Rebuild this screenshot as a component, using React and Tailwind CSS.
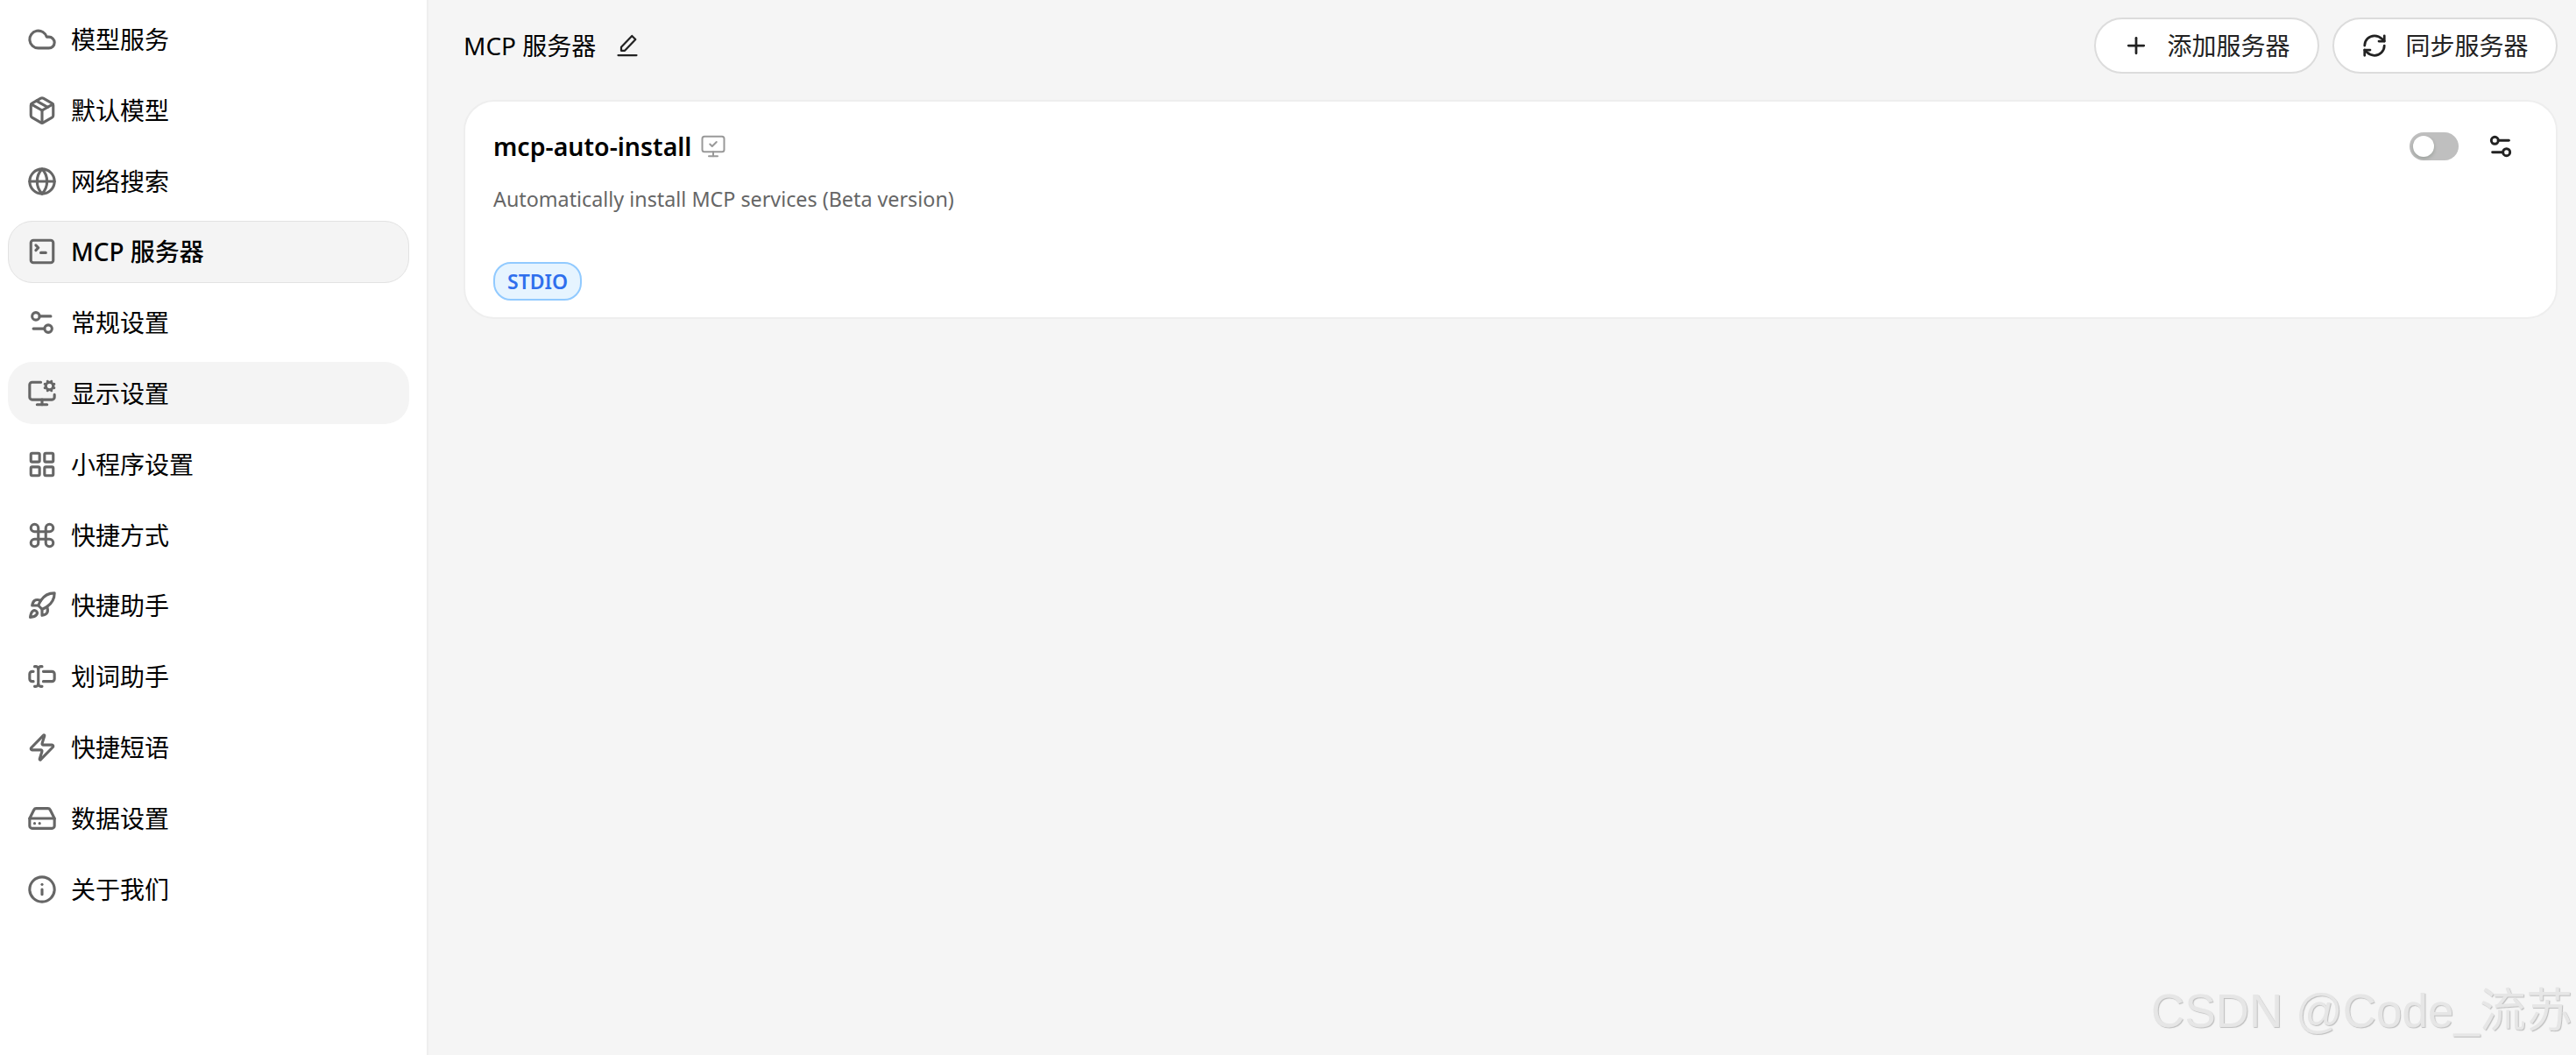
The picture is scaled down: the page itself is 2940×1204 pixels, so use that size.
import React from "react";
import {
  Cloud,
  Package,
  Globe,
  SquareTerminal,
  Settings2,
  MonitorCog,
  LayoutGrid,
  Command,
  Rocket,
  TextCursorInput,
  Zap,
  HardDrive,
  Info,
  MonitorCheck,
  Plus,
  RefreshCw,
} from "lucide-react";

const font = "font-['Noto_Sans','Noto_Sans_CJK_SC',sans-serif]";

const menu = [
  { label: "模型服务", icon: Cloud },
  { label: "默认模型", icon: Package },
  { label: "网络搜索", icon: Globe },
  { label: "MCP 服务器", icon: SquareTerminal, active: true },
  { label: "常规设置", icon: Settings2 },
  { label: "显示设置", icon: MonitorCog, hover: true },
  { label: "小程序设置", icon: LayoutGrid },
  { label: "快捷方式", icon: Command },
  { label: "快捷助手", icon: Rocket },
  { label: "划词助手", icon: TextCursorInput },
  { label: "快捷短语", icon: Zap },
  { label: "数据设置", icon: HardDrive },
  { label: "关于我们", icon: Info },
];

function PenIcon() {
  return (
    <svg width="28" height="28" viewBox="0 0 24 24" fill="none" stroke="#222" strokeWidth="1.9" strokeLinecap="round" strokeLinejoin="round">
      <path d="M3 21.5h18" />
      <path d="M16.5 2.5l3.5 3.5L9.5 17H6v-3.5z" />
    </svg>
  );
}

function MenuItem({ item }) {
  const Icon = item.icon;
  let tone = "border-transparent";
  if (item.active) tone = "border-[#e2e2e2] bg-[#f4f4f4] font-medium";
  if (item.hover) tone = "border-transparent bg-[#f4f4f4]";
  return (
    <div className={`flex h-[71px] items-center gap-[16px] rounded-[28px] border px-[21px] text-[28px] text-black ${tone}`}>
      <Icon size={34} strokeWidth={2.2} className="shrink-0 text-[#666]" />
      <span>{item.label}</span>
    </div>
  );
}

function HeaderButton({ icon: Icon, label }) {
  return (
    <button className="flex h-[64px] w-[257px] items-center justify-center gap-[20px] rounded-full border-2 border-[#dcdcdc] bg-white text-[28px] text-[#222]">
      <Icon size={30} strokeWidth={2.2} />
      <span>{label}</span>
    </button>
  );
}

export default function App() {
  return (
    <div className={`relative flex h-screen overflow-hidden bg-[#f5f5f5] ${font}`}>
      <aside className="flex w-[489px] shrink-0 flex-col gap-[9.8px] border-r-2 border-[#eeeeee] bg-white py-[9.5px] pr-[20px] pl-[9px]">
        {menu.map((item) => (
          <MenuItem key={item.label} item={item} />
        ))}
      </aside>

      <main className="flex min-w-0 flex-1 flex-col pt-[20px] pr-[21px] pl-[40px]">
        <div className="flex h-[64px] items-center justify-between">
          <div className="flex items-center gap-[22px] text-[28px] text-black">
            <span>MCP 服务器</span>
            <PenIcon />
          </div>
          <div className="flex gap-[15px]">
            <HeaderButton icon={Plus} label="添加服务器" />
            <HeaderButton icon={RefreshCw} label="同步服务器" />
          </div>
        </div>

        <section className="mt-[30px] flex h-[250px] flex-col rounded-[35px] border-2 border-[#eeeeee] bg-white pt-[25px] pr-[47px] pb-[19px] pl-[32px]">
          <div className="flex h-[52px] items-center justify-between">
            <div className="flex items-center gap-[10px]">
              <span className="text-[28.5px] leading-none font-semibold text-black">mcp-auto-install</span>
              <MonitorCheck size={30} strokeWidth={1.6} className="text-[#999]" />
            </div>
            <div className="flex items-center gap-[32px]">
              <div className="flex h-[32px] w-[56px] items-center rounded-full bg-[#bfbfbf] px-[4px]">
                <div className="h-[24px] w-[24px] rounded-full bg-white shadow-[0_2px_4px_rgba(0,35,11,0.2)]" />
              </div>
              <Settings2 size={32} strokeWidth={2.2} className="text-[#222]" />
            </div>
          </div>
          <p className="mt-[23px] text-[23.3px] leading-none text-[#666]">Automatically install MCP services (Beta version)</p>
          <div className="mt-auto">
            <span className="inline-flex h-[44px] items-center rounded-[20px] border-2 border-[#91caff] bg-[#e6f4ff] px-[14px] text-[23px] font-semibold text-[#2f6fed]">
              STDIO
            </span>
          </div>
        </section>
      </main>

      <div className="absolute right-[4px] bottom-[24px] font-['Liberation_Sans','Noto_Sans_CJK_SC',sans-serif] text-[53px] leading-none whitespace-nowrap text-[#e6e6e6] [text-shadow:1px_1px_1px_#bdbdbd]">
        CSDN @Code_流苏
      </div>
    </div>
  );
}
